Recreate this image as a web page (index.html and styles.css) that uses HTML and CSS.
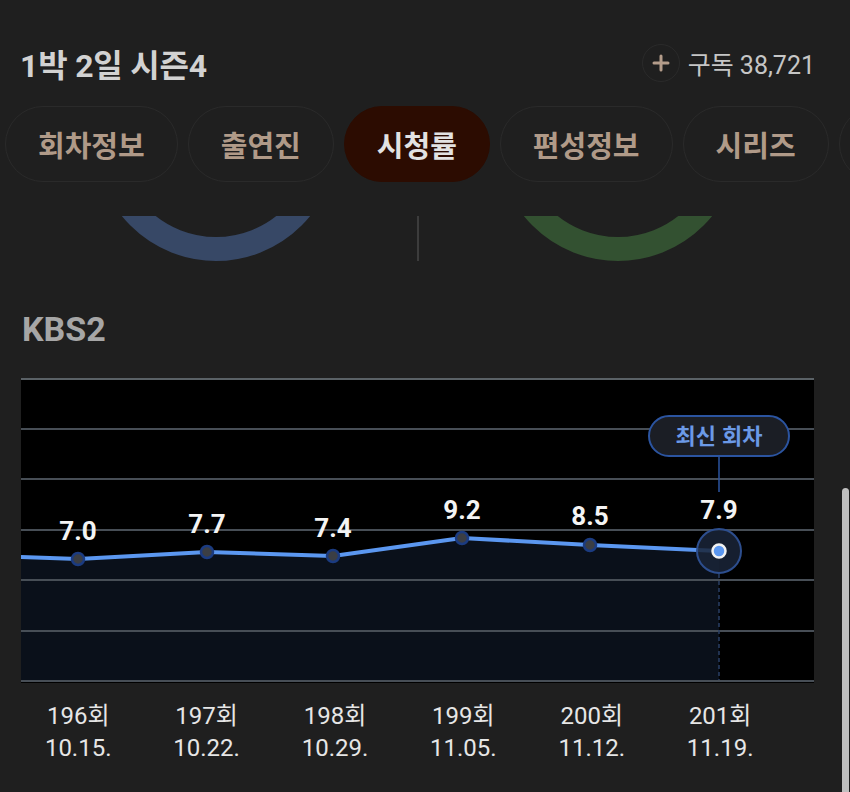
FILE: index.html
```html
<!DOCTYPE html>
<html lang="ko">
<head>
  <meta charset="UTF-8">
  <meta name="viewport" content="width=device-width, initial-scale=1.0">
  <title>1박 2일 시즌4 - 시청률</title>
  <link rel="stylesheet" href="styles.css">
</head>
<body>
  <!-- Header Section -->
  <div class="header-area">
    <div class="title-row">
      <h1 class="show-title">1박 2일 시즌4</h1>
      <div class="subscribe">
        <span class="plus-btn">
          <svg width="18" height="18" viewBox="0 0 18 18"><path d="M9 2v14M2 9h14" stroke="#b39c8a" stroke-width="3" stroke-linecap="round"/></svg>
        </span>
        <span class="sub-text">구독 38,721</span>
      </div>
    </div>
    <ul class="tabs">
      <li class="tab">회차정보</li>
      <li class="tab">출연진</li>
      <li class="tab active">시청률</li>
      <li class="tab">편성정보</li>
      <li class="tab">시리즈</li>
      <li class="tab tab-more"></li>
    </ul>
  </div>

  <!-- Rating rings (scrolled under header) -->
  <div class="rings">
    <svg width="850" height="45" viewBox="0 0 850 45">
      <circle cx="216" cy="-76" r="109" fill="none" stroke="#374866" stroke-width="24"/>
      <circle cx="618" cy="-76" r="109" fill="none" stroke="#335131" stroke-width="24"/>
      <rect x="417" y="0" width="2" height="45" fill="#3c3c3c"/>
    </svg>
  </div>

  <!-- Channel chart -->
  <div class="channel">
    <h2 class="channel-name">KBS2</h2>
    <div class="chart">
      <svg width="793" height="305" viewBox="0 0 793 305">
        <polygon points="0,179 57,181 186,174 312,178 441,160 569,167 698,173 698,303 0,303" fill="#0a101a"/>
        <g stroke="#474e56" stroke-width="2">
          <line x1="0" y1="1" x2="793" y2="1" stroke="#5a6166"/>
          <line x1="0" y1="51" x2="793" y2="51"/>
          <line x1="0" y1="101" x2="793" y2="101"/>
          <line x1="0" y1="152" x2="793" y2="152"/>
          <line x1="0" y1="202" x2="793" y2="202"/>
          <line x1="0" y1="253" x2="793" y2="253"/>
          <line x1="0" y1="303" x2="793" y2="303"/>
        </g>
        <line x1="698" y1="196" x2="698" y2="302" stroke="#2a3f66" stroke-width="1.5" stroke-dasharray="4 3"/>
        <polyline points="0,179 57,181 186,174 312,178 441,160 569,167 698,173" fill="none" stroke="#5b97f0" stroke-width="4" stroke-linejoin="round"/>
        <g fill="#3b3e44" stroke="#1b3b80" stroke-width="2.5">
          <circle cx="57" cy="181" r="6"/>
          <circle cx="186" cy="174" r="6"/>
          <circle cx="312" cy="178" r="6"/>
          <circle cx="441" cy="160" r="6"/>
          <circle cx="569" cy="167" r="6"/>
        </g>
        <circle cx="698" cy="173" r="22" fill="#1a2438" fill-opacity="0.85" stroke="#2d4e8e" stroke-width="2"/>
        <circle cx="698" cy="173" r="6.5" fill="#5b97f0" stroke="#f2f2f2" stroke-width="2.5"/>
        <g class="value-labels">
          <text x="57" y="162">7.0</text>
          <text x="186" y="155">7.7</text>
          <text x="312" y="159">7.4</text>
          <text x="441" y="141">9.2</text>
          <text x="569" y="147">8.5</text>
          <text x="698" y="141">7.9</text>
        </g>
        <line x1="698" y1="79" x2="698" y2="114" stroke="#2b54a0" stroke-width="1.5"/>
        <rect x="628" y="38" width="140" height="40" rx="20" fill="#1b1e25" stroke="#2b54a0" stroke-width="2"/>
        <text class="latest-label" x="698" y="66">최신 회차</text>
      </svg>
    </div>
    <div class="x-labels">
      <div class="x-label">196회<br>10.15.</div>
      <div class="x-label">197회<br>10.22.</div>
      <div class="x-label">198회<br>10.29.</div>
      <div class="x-label">199회<br>11.05.</div>
      <div class="x-label">200회<br>11.12.</div>
      <div class="x-label">201회<br>11.19.</div>
    </div>
  </div>

  <div class="scroll-thumb"></div>
</body>
</html>
```
FILE: styles.css
```css
* {
  margin: 0;
  padding: 0;
  box-sizing: border-box;
}

body {
  font-family: Roboto, "Noto Sans CJK KR", sans-serif;
  background-color: #1f1f1f;
  width: 850px;
  height: 792px;
  overflow: hidden;
}

/* Header Section */
.header-area {
  padding-top: 32px;
}

.title-row {
  display: flex;
  justify-content: space-between;
  align-items: center;
  height: 62px;
  padding: 0 35px 0 20px;
}

.show-title {
  font-size: 32px;
  font-weight: bold;
  color: #d2d2d2;
  letter-spacing: -0.2px;
}

.subscribe {
  display: flex;
  align-items: center;
  gap: 8px;
}

.plus-btn {
  width: 38px;
  height: 38px;
  border-radius: 50%;
  border: 1px solid #2a2a2a;
  display: flex;
  align-items: center;
  justify-content: center;
}

.sub-text {
  font-size: 25px;
  color: #c6c6c6;
}

.tabs {
  display: flex;
  gap: 10px;
  margin-top: 12px;
  padding-left: 5px;
  list-style: none;
  white-space: nowrap;
}

.tab {
  flex-shrink: 0;
  height: 76px;
  padding: 0 32px;
  border: 1px solid #2a2a2a;
  border-radius: 38px;
  display: flex;
  align-items: center;
  font-size: 29px;
  font-weight: bold;
  color: #b09a88;
}

.tab.active {
  background-color: #2c0c01;
  border-color: #2c0c01;
  color: #e2e2e2;
}

.tab-more {
  width: 120px;
}

/* Rings */
.rings {
  margin-top: 34px;
  height: 45px;
  overflow: hidden;
}

.rings svg {
  display: block;
}

/* Channel chart */
.channel {
  margin-top: 48px;
}

.channel-name {
  padding-left: 22px;
  font-size: 34px;
  line-height: 40px;
  font-weight: bold;
  color: #a6a6a6;
}

.chart {
  margin: 29px 0 0 21px;
  width: 793px;
  height: 305px;
  background-color: #000;
}

.chart svg {
  display: block;
}

.value-labels text {
  font-family: Roboto, sans-serif;
  font-size: 26px;
  font-weight: bold;
  fill: #f4f4f4;
  text-anchor: middle;
}

.latest-label {
  font-family: "Noto Sans CJK KR", sans-serif;
  font-size: 22px;
  font-weight: bold;
  fill: #6b99e6;
  text-anchor: middle;
}

.x-labels {
  display: flex;
  margin: 17px 0 0 14px;
}

.x-label {
  width: 128.4px;
  text-align: center;
  font-size: 24px;
  line-height: 32px;
  color: #e6e6e6;
}

.scroll-thumb {
  position: absolute;
  top: 488px;
  right: 1px;
  width: 7px;
  height: 320px;
  border-radius: 4px;
  background-color: #bfbfbf;
}
```
